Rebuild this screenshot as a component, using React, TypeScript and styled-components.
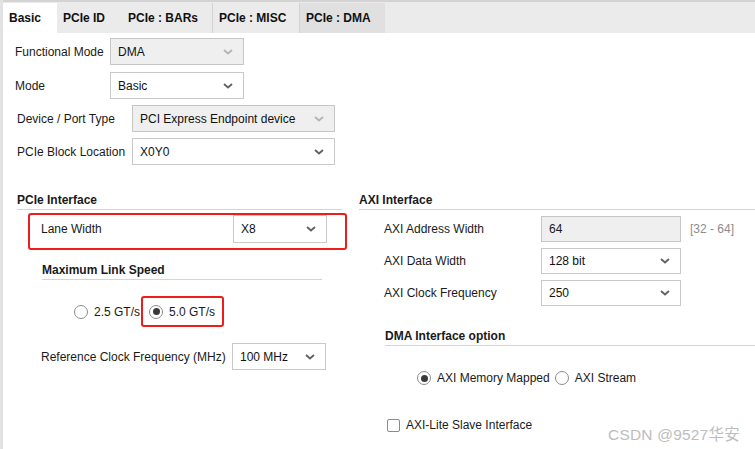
import React from "react";
import styled, { createGlobalStyle } from "styled-components";

const Global = createGlobalStyle`
  html, body { margin: 0; padding: 0; background: #fff; }
  body { font-family: "Liberation Sans", Arial, sans-serif; font-size: 12px; color: #1a1a1a; }
  * { box-sizing: border-box; }
`;

const Page = styled.div`
  position: relative;
  width: 755px;
  height: 449px;
  overflow: hidden;
  border-left: 3px solid #e2e2e2;
  background: #fff;
`;

const TabBar = styled.div`
  display: flex;
  height: 33px;
  padding-top: 1px;
  border-top: 2px solid #d3d3d3;
  background: #ebebeb;
`;

const Tab = styled.div<{ $active?: boolean; $hover?: boolean; $sep?: boolean }>`
  display: flex;
  align-items: center;
  height: 30px;
  padding: 0 0 0 6px;
  width: ${(p) => (p.$active ? "54px" : "auto")};
  font-weight: bold;
  color: #111;
  background: ${(p) => (p.$active ? "#fff" : p.$hover ? "#e0e0e0" : "transparent")};
  border-right: ${(p) => (p.$sep ? "1px solid #d2d2d2" : "1px solid transparent")};
`;

const TabText = styled.span<{ $w: number }>`
  display: inline-block;
  width: ${(p) => p.$w}px;
`;

const Content = styled.div`
  padding: 5px 0 0 12px;
  display: flex;
  flex-direction: column;
`;

const FormGrid = styled.div<{ $label: number; $ctrl: number; $gap: number; $indent?: number; $mt?: number }>`
  display: grid;
  grid-template-columns: ${(p) => p.$label}px ${(p) => p.$ctrl}px;
  row-gap: ${(p) => p.$gap}px;
  align-items: center;
  margin-left: ${(p) => p.$indent ?? 0}px;
  margin-top: ${(p) => p.$mt ?? 0}px;
`;

const Label = styled.div`
  white-space: nowrap;
`;

const SelectBox = styled.div<{ $disabled?: boolean; $h?: number }>`
  display: flex;
  align-items: center;
  justify-content: space-between;
  height: ${(p) => p.$h ?? 27}px;
  padding: 0 10px 0 7px;
  border: 1px solid ${(p) => (p.$disabled ? "#c6c6c6" : "#c9c9c9")};
  background: ${(p) => (p.$disabled ? "#efefef" : "#fff")};
  color: #111;
`;

const Chevron: React.FC<{ disabled?: boolean }> = ({ disabled }) => (
  <svg width="10" height="6" viewBox="0 0 10 6">
    <polyline
      points="1,1 5,4.5 9,1"
      fill="none"
      stroke={disabled ? "#b4b4b4" : "#606060"}
      strokeWidth="1.8"
    />
  </svg>
);

const Select: React.FC<{ value: string; disabled?: boolean; h?: number }> = ({ value, disabled, h }) => (
  <SelectBox $disabled={disabled} $h={h}>
    <span>{value}</span>
    <Chevron disabled={disabled} />
  </SelectBox>
);

const TextInput = styled.div`
  display: flex;
  align-items: center;
  height: 26px;
  padding: 0 7px;
  border: 1px solid #c6c6c6;
  background: #efefef;
`;

const Columns = styled.div`
  display: flex;
  gap: 17px;
  margin-top: 28px;
  padding-left: 2px;
`;

const LeftCol = styled.div`
  width: 325px;
  display: flex;
  flex-direction: column;
`;

const RightCol = styled.div`
  flex: 1;
  display: flex;
  flex-direction: column;
`;

const SectionHeader = styled.div<{ $indent?: number; $right?: number; $mt?: number }>`
  height: 17px;
  line-height: 15px;
  font-weight: bold;
  border-bottom: 1px solid #d4d4d4;
  margin-left: ${(p) => p.$indent ?? 0}px;
  margin-right: ${(p) => p.$right ?? 0}px;
  margin-top: ${(p) => p.$mt ?? 0}px;
`;

const Highlight = styled.div`
  border: 2px solid #ee1c1c;
  border-radius: 3px;
`;

const LaneBox = styled(Highlight)`
  display: flex;
  align-items: flex-start;
  margin: 3px -5px 0 11px;
  padding: 0 18px 5px 11px;
`;

const LaneLabel = styled.div`
  flex: 1;
  height: 27px;
  display: flex;
  align-items: center;
`;

const LaneSelect = styled.div`
  width: 94px;
`;

const RadioRow = styled.div<{ $indent: number; $mt: number; $h: number }>`
  display: flex;
  align-items: center;
  height: ${(p) => p.$h}px;
  margin-left: ${(p) => p.$indent}px;
  margin-top: ${(p) => p.$mt}px;
`;

const RadioItem = styled.label`
  display: flex;
  align-items: center;
  gap: 6px;
`;

const RadioCircle = styled.span<{ $on?: boolean }>`
  position: relative;
  width: 14px;
  height: 14px;
  border-radius: 50%;
  border: 1px solid #8c8c8c;
  background: #fff;
  &::after {
    content: "";
    display: ${(p) => (p.$on ? "block" : "none")};
    position: absolute;
    left: 2.5px;
    top: 2.5px;
    width: 7px;
    height: 7px;
    border-radius: 50%;
    background: #3a3a3a;
  }
`;

const SpeedBox = styled(Highlight)`
  display: flex;
  align-items: center;
  height: 31px;
  padding: 0 7px 0 6px;
  margin-left: 1px;
`;

const Hint = styled.span`
  color: #8c8c8c;
  margin-left: 9px;
  white-space: nowrap;
`;

const AxiGrid = styled.div`
  display: grid;
  grid-template-columns: 157px 140px auto;
  grid-auto-rows: 26px;
  row-gap: 6px;
  align-items: center;
  margin-left: 25px;
  margin-top: 6px;
`;

const CheckRow = styled.label`
  display: flex;
  align-items: center;
  gap: 6px;
  height: 20px;
  margin-left: 28px;
  margin-top: 27px;
`;

const CheckBox = styled.span`
  width: 13px;
  height: 13px;
  border: 1px solid #8a8a8a;
  border-radius: 2px;
  background: #fff;
`;

const Watermark = styled.div`
  position: absolute;
  left: 605px;
  top: 422px;
  font-family: "Liberation Sans", "Noto Sans CJK SC", sans-serif;
  font-size: 15.5px;
  color: #bdbdbd;
  letter-spacing: 0.2px;
`;

export default function App() {
  return (
    <>
      <Global />
      <Page>
        <TabBar>
          <Tab $active><TabText $w={48}>Basic</TabText></Tab>
          <Tab><TabText $w={58}>PCIe ID</TabText></Tab>
          <Tab $sep><TabText $w={84}>PCIe : BARs</TabText></Tab>
          <Tab $sep><TabText $w={80}>PCIe : MISC</TabText></Tab>
          <Tab $hover><TabText $w={78}>PCIe : DMA</TabText></Tab>
        </TabBar>
        <Content>
          <FormGrid $label={95} $ctrl={134} $gap={7}>
            <Label>Functional Mode</Label>
            <Select value="DMA" disabled />
            <Label>Mode</Label>
            <Select value="Basic" />
          </FormGrid>
          <FormGrid $label={115} $ctrl={203} $gap={6} $indent={2} $mt={6}>
            <Label>Device / Port Type</Label>
            <Select value="PCI Express Endpoint device" disabled />
            <Label>PCIe Block Location</Label>
            <Select value="X0Y0" />
          </FormGrid>
          <Columns>
            <LeftCol>
              <SectionHeader>PCIe Interface</SectionHeader>
              <LaneBox>
                <LaneLabel>Lane Width</LaneLabel>
                <LaneSelect>
                  <Select value="X8" h={28} />
                </LaneSelect>
              </LaneBox>
              <SectionHeader $indent={25} $right={20} $mt={13}>Maximum Link Speed</SectionHeader>
              <RadioRow $indent={57} $mt={16} $h={31}>
                <RadioItem>
                  <RadioCircle />
                  <span>2.5 GT/s</span>
                </RadioItem>
                <SpeedBox>
                  <RadioItem>
                    <RadioCircle $on />
                    <span>5.0 GT/s</span>
                  </RadioItem>
                </SpeedBox>
              </RadioRow>
              <FormGrid $label={191} $ctrl={94} $gap={0} $indent={24} $mt={16}>
                <Label>Reference Clock Frequency (MHz)</Label>
                <Select value="100 MHz" />
              </FormGrid>
            </LeftCol>
            <RightCol>
              <SectionHeader>AXI Interface</SectionHeader>
              <AxiGrid>
                <Label>AXI Address Width</Label>
                <TextInput>64</TextInput>
                <Hint>[32 - 64]</Hint>
                <Label>AXI Data Width</Label>
                <Select value="128 bit" h={26} />
                <span />
                <Label>AXI Clock Frequency</Label>
                <Select value="250" h={26} />
                <span />
              </AxiGrid>
              <SectionHeader $indent={26} $mt={23}>DMA Interface option</SectionHeader>
              <RadioRow $indent={58} $mt={22} $h={20}>
                <RadioItem>
                  <RadioCircle $on />
                  <span>AXI Memory Mapped</span>
                </RadioItem>
                <RadioItem style={{ marginLeft: 5 }}>
                  <RadioCircle />
                  <span>AXI Stream</span>
                </RadioItem>
              </RadioRow>
              <CheckRow>
                <CheckBox />
                <span>AXI-Lite Slave Interface</span>
              </CheckRow>
            </RightCol>
          </Columns>
        </Content>
        <Watermark>CSDN @9527华安</Watermark>
      </Page>
    </>
  );
}
